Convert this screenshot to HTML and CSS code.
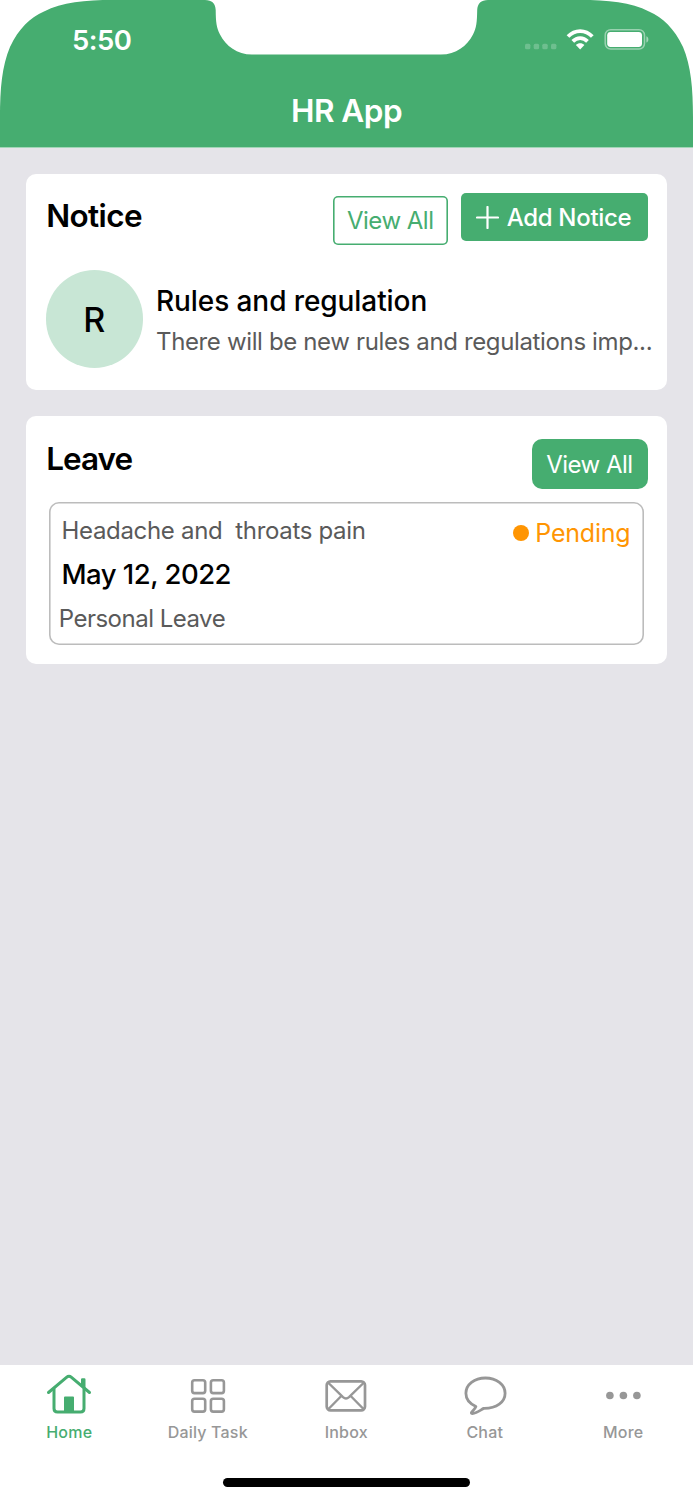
FILE: index.html
```html
<!DOCTYPE html>
<html lang="en">
<head>
<meta charset="utf-8">
<title>HR App</title>
<link rel="stylesheet" href="styles.css">
</head>
<body>
<div class="screen">
  <header class="header">
    <svg class="header-shape" width="693" height="148" viewBox="0 0 693 148" aria-hidden="true">
      <path fill="#46ad70" d="M0 147.600V118C0 88 2 66 10 47C19 28 30 18 44 11.500C62 2 85 0 113 0H205C212 0 215.500 3.500 215.700 10C215.800 22 216.500 28 220 34.500C226 46 237 54.600 252 54.600H441C456 54.600 467 46 473 34.500C476.500 28 477 22 477.200 10C477.500 3.500 481 0 488 0H580C608 0 631 2 649 11.500C663 18 674 28 683 47C691 66 693 88 693 118V147.600Z"/>
    </svg>
    <div class="status">
      <span class="time">5:50</span>
      <svg class="status-icons" width="126" height="30" viewBox="524 25 126 30" aria-hidden="true">
        <g fill="#fff" fill-opacity=".22">
          <rect x="525" y="43.800" width="5.400" height="5.400" rx="1.500"/>
          <rect x="533.700" y="43.800" width="5.400" height="5.400" rx="1.500"/>
          <rect x="542.300" y="43.800" width="5.400" height="5.400" rx="1.500"/>
          <rect x="551" y="43.800" width="5.400" height="5.400" rx="1.500"/>
        </g>
        <g fill="none" stroke="#fff" stroke-width="3.700">
          <path d="M568 36.500C574.800 29.200 585.500 29.200 592.300 36.500"/>
          <path d="M572.800 41.400C577 37 583.300 37 587.500 41.400"/>
        </g>
        <path fill="#fff" d="M575.900 45C578.200 42.500 582.100 42.500 584.400 45L580.150 49.400Z"/>
        <rect x="605.200" y="29.700" width="39.300" height="19.400" rx="5.500" fill="none" stroke="#fff" stroke-opacity=".45" stroke-width="1.500"/>
        <rect x="607.200" y="31.900" width="34.800" height="15" rx="3.400" fill="#fff"/>
        <path fill="#fff" fill-opacity=".5" d="M646.400 36.200C649 37.200 649 41.600 646.400 42.600Z"/>
      </svg>
    </div>
    <h1 class="title">HR App</h1>
  </header>

  <main class="content">
    <section class="card notice">
      <div class="card-head">
        <h2 class="heading">Notice</h2>
        <div class="actions">
          <button class="btn btn-outline">View All</button>
          <button class="btn btn-add">
            <svg width="23" height="23" viewBox="0 0 23 23" aria-hidden="true"><path d="M11.500 1V22M1 11.500H22" stroke="#fff" stroke-width="2.200" stroke-linecap="round"/></svg>
            <span>Add Notice</span>
          </button>
        </div>
      </div>
      <div class="notice-row">
        <div class="avatar">R</div>
        <div class="notice-text">
          <div class="notice-title">Rules and regulation</div>
          <div class="notice-body">There will be new rules and regulations imp...</div>
        </div>
      </div>
    </section>

    <section class="card leave">
      <div class="card-head">
        <h2 class="heading">Leave</h2>
        <button class="btn btn-solid">View All</button>
      </div>
      <div class="leave-item">
        <div class="leave-info">
          <div class="reason">Headache and  throats pain</div>
          <div class="date">May 12, 2022</div>
          <div class="type">Personal Leave</div>
        </div>
        <div class="state"><i class="dot"></i><span>Pending</span></div>
      </div>
    </section>
  </main>

  <nav class="tabs">
    <a class="tab active">
      <svg width="50" height="44" viewBox="44 1372 50 44" fill="none" stroke="currentColor" stroke-width="3" stroke-linecap="round" stroke-linejoin="round" aria-hidden="true">
        <path d="M48.500 1392.500L66.500 1377.300Q69 1375.200 71.500 1377.300L89.500 1392.500"/>
        <path d="M54 1389V1408.500Q54 1412 57.500 1412H80.500Q84 1412 84 1408.500V1389"/>
        <path fill="currentColor" stroke="none" d="M64 1397.500Q64 1396.500 65 1396.500H73Q74 1396.500 74 1397.500V1412H64ZM81 1379.500Q81 1378.300 82.200 1378.300H84.300Q85.500 1378.300 85.500 1379.500V1389L81 1385.500Z"/>
      </svg>
      <span>Home</span>
    </a>
    <a class="tab">
      <svg width="50" height="44" viewBox="182.500 1372 50 44" fill="none" stroke="currentColor" stroke-width="2.600" aria-hidden="true">
        <rect x="191.700" y="1380.300" width="13" height="12.800" rx="2.300"/><rect x="210.400" y="1380.300" width="13" height="12.800" rx="2.300"/>
        <rect x="191.700" y="1398.800" width="13" height="12.800" rx="2.300"/><rect x="210.400" y="1398.800" width="13" height="12.800" rx="2.300"/>
      </svg>
      <span>Daily Task</span>
    </a>
    <a class="tab">
      <svg width="50" height="44" viewBox="321 1372 50 44" fill="none" stroke="currentColor" stroke-width="2.700" aria-hidden="true">
        <rect x="326.700" y="1381.300" width="38.300" height="29" rx="3.800"/>
        <path stroke-width="2.400" d="M328 1382.500L343 1397.200Q346 1400 349 1397.200L364 1382.500M328 1409.500L341.300 1396M364 1409.500L350.700 1396"/>
      </svg>
      <span>Inbox</span>
    </a>
    <a class="tab">
      <svg width="50" height="44" viewBox="459.300 1372 50 44" fill="none" stroke="currentColor" stroke-width="2.800" stroke-linejoin="round" aria-hidden="true">
        <path d="M475.200 1406.500C468.500 1403.500 465.200 1398.800 465.200 1393.300C465.200 1384.700 473.600 1378 484.700 1378C495.800 1378 504.400 1384.700 504.400 1393.300C504.400 1402 496 1408.600 483 1408.400C480.500 1409.500 476.500 1413 471.500 1413.500C470.500 1413.500 470.400 1413 471 1412.200C473 1410 474.500 1408.500 475.200 1406.500Z"/>
      </svg>
      <span>Chat</span>
    </a>
    <a class="tab">
      <svg width="50" height="44" viewBox="597.600 1372 50 44" fill="currentColor" aria-hidden="true">
        <circle cx="609.500" cy="1395.500" r="3.800"/><circle cx="623" cy="1395.500" r="3.800"/><circle cx="636.500" cy="1395.500" r="3.800"/>
      </svg>
      <span>More</span>
    </a>
  </nav>
  <div class="home-indicator"></div>
</div>
</body>
</html>
```
FILE: styles.css
```css
* { box-sizing: border-box; }
body { margin: 0; background: #fff; font-family: Inter, "Liberation Sans", sans-serif; color: #000; }
h1, h2 { margin: 0; }
.screen { display: flex; flex-direction: column; width: 693px; height: 1500px; overflow: hidden; }

.header { position: relative; flex: none; height: 147.6px; color: #fff; }
.header-shape { position: absolute; top: 0; left: 0; }
.status { position: relative; display: flex; justify-content: space-between; padding: 25px 43px 0 72px; height: 90px; }
.time { font-size: 27.5px; font-weight: 600; line-height: 30px; letter-spacing: -0.5px; }
.title { position: relative; font-size: 31.5px; font-weight: 600; line-height: 41px; letter-spacing: -0.5px; text-align: center; }

.content { flex: 1; display: flex; flex-direction: column; gap: 26px; padding: 26px; background: #e5e4e9; }
.card { background: #fff; border-radius: 10px; }
.card-head { display: flex; justify-content: space-between; align-items: flex-start; }
.heading { padding-left: 0.7px; font-size: 31.5px; font-weight: 600; line-height: 40px; letter-spacing: -0.6px; white-space: nowrap; }
.actions { display: flex; gap: 12.5px; align-items: flex-start; }

.btn { display: flex; align-items: center; justify-content: center; border: 0; padding: 0; font-family: inherit; font-size: 24px; letter-spacing: -0.5px; color: #fff; background: #46ad70; }
.btn-outline { width: 115.5px; height: 49px; margin-top: 3px; box-shadow: inset 0 0 0 1.6px #46ad70; border-radius: 5px; background: #fff; color: #46ad70; }
.btn-add { width: 187px; height: 48.5px; gap: 8px; padding-right: 1px; border-radius: 5px; font-weight: 500; letter-spacing: -0.3px; }
.btn-solid { width: 115.5px; height: 50.5px; padding-right: 0.7px; border-radius: 10px; }

.notice { height: 216.7px; padding: 19.4px 14px 0 19.5px; }
.notice .card-head { height: 77.5px; padding-right: 5.5px; }
.notice .heading { margin-top: 3.2px; }
.notice-row { display: flex; gap: 12.5px; }
.avatar { flex: none; width: 97.5px; height: 97.5px; border-radius: 50%; background: #c8e6d5; font-size: 34px; font-weight: 500; line-height: 99px; text-align: center; }
.notice-text { padding-top: 11px; white-space: nowrap; }
.notice-title { padding-left: 0.5px; font-size: 28px; font-weight: 500; line-height: 41px; letter-spacing: -0.08px; }
.notice-body { padding-left: 0.5px; font-size: 24px; line-height: 40px; letter-spacing: -0.36px; color: #5a5a5a; }

.leave { height: 248.2px; padding: 22.7px 19.5px 0 19.5px; }
.leave .heading { letter-spacing: -1px; }
.leave .card-head { height: 63px; }
.leave-item { display: flex; justify-content: space-between; width: 595px; height: 143px; margin-left: 3.5px; padding: 7px 13.5px 0 9px; box-shadow: inset 0 0 0 1.6px #bcbcbc; border-radius: 10px; }
.leave-info { line-height: 44px; }
.reason, .type { font-size: 24px; color: #5a5a5a; }
.reason { padding-left: 3.5px; line-height: 43px; letter-spacing: -0.32px; white-space: pre; }
.date { padding-left: 3.5px; font-size: 27.5px; font-weight: 500; letter-spacing: -0.52px; }
.type { padding-left: 0.7px; line-height: 45px; letter-spacing: -0.5px; }
.state { display: flex; align-items: center; gap: 6px; height: 48px; color: #ff9502; font-size: 25px; letter-spacing: -0.2px; }
.dot { width: 16.5px; height: 16.5px; border-radius: 50%; background: currentColor; }

.tabs { display: flex; flex: none; height: 113px; padding: 7px 0.5px 0 0; }
.tab { flex: 1; display: flex; flex-direction: column; align-items: center; color: #979797; font-size: 16px; font-weight: 500; line-height: 20px; letter-spacing: 0.2px; }
.tab span { margin-top: 6.3px; }
.tab.active { color: #46ad70; }
.home-indicator { flex: none; width: 247.5px; height: 8.5px; margin: 0 auto 13.5px; border-radius: 5px; background: #000; }
```
